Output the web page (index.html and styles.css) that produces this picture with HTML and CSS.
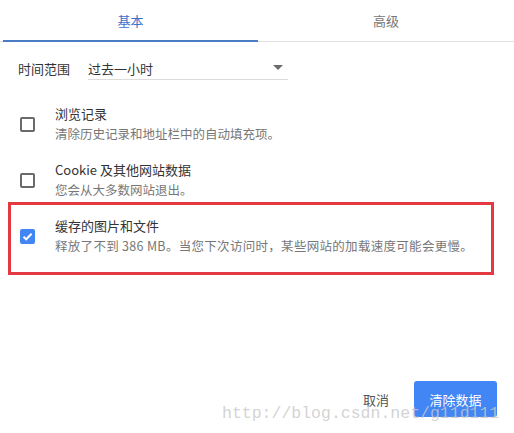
FILE: index.html
```html
<!DOCTYPE html>
<html lang="zh-CN">
<head>
<meta charset="utf-8">
<link rel="stylesheet" href="styles.css">
</head>
<body>
<div class="dialog">
  <div class="tabs">
    <div class="tab active">基本</div>
    <div class="tab">高级</div>
  </div>
  <div class="range">
    <span class="range-label">时间范围</span>
    <div class="select">
      <span>过去一小时</span>
      <span class="caret"></span>
    </div>
  </div>
  <div class="items">
    <div class="item">
      <span class="box"></span>
      <div class="text">
        <div class="title">浏览记录</div>
        <div class="desc">清除历史记录和地址栏中的自动填充项。</div>
      </div>
    </div>
    <div class="item">
      <span class="box"></span>
      <div class="text">
        <div class="title">Cookie 及其他网站数据</div>
        <div class="desc">您会从大多数网站退出。</div>
      </div>
    </div>
    <div class="highlight">
      <div class="item inner">
        <span class="box checked">
          <svg width="15" height="15" viewBox="0 0 15 15"><path d="M3.5 7.8 L6.2 10.3 L11.6 4.8" fill="none" stroke="#fff" stroke-width="2"/></svg>
        </span>
        <div class="text">
          <div class="title">缓存的图片和文件</div>
          <div class="desc wide">释放了不到 386 MB。当您下次访问时，某些网站的加载速度可能会更慢。</div>
        </div>
      </div>
    </div>
  </div>
  <div class="footer">
    <button class="btn cancel">取消</button>
    <button class="btn primary">清除数据</button>
  </div>
  <div class="watermark">http://blog.csdn.net/g11d111</div>
</div>
</body>
</html>
```
FILE: styles.css
```css
html, body {
  margin: 0;
  padding: 0;
  background: #fff;
}
body {
  font-family: "Noto Sans CJK SC", "Microsoft YaHei", sans-serif;
  font-size: 13px;
  color: #333;
}
.dialog {
  position: relative;
  width: 514px;
  height: 433px;
  display: flex;
  flex-direction: column;
  overflow: hidden;
}
.tabs {
  display: flex;
  padding-left: 3px;
  border-bottom: 1px solid #e0e0e0;
  box-sizing: border-box;
  height: 42px;
}
.tab {
  flex: 1;
  display: flex;
  align-items: center;
  justify-content: center;
  color: #777;
  line-height: 20px;
  padding-top: 1px;
}
.tab:first-child {
  flex: 0 0 255px;
}
.tab.active {
  color: #3d6fce;
  border-bottom: 2px solid #4a7cc6;
  margin-bottom: -1px;
}
.range {
  display: flex;
  align-items: center;
  margin-top: 15px;
  padding-left: 18px;
}
.range-label {
  width: 70px;
  line-height: 20px;
}
.select {
  height: 22px;
  border-bottom: 1px solid #dcdcdc;
  display: flex;
  align-items: center;
  justify-content: space-between;
  padding-right: 5px;
  width: 195px;
  color: #333;
}
.caret {
  width: 0;
  height: 0;
  border-left: 5px solid transparent;
  border-right: 5px solid transparent;
  border-top: 5px solid #6b6b6b;
  margin-top: -2px;
}
.items {
  margin-top: 24px;
  display: flex;
  flex-direction: column;
  gap: 16px;
}
.item {
  display: flex;
  align-items: center;
  gap: 20px;
  padding-left: 20px;
}
.box {
  width: 15px;
  height: 15px;
  box-sizing: border-box;
  border: 2px solid #6a6a6a;
  border-radius: 2px;
  flex: none;
  display: flex;
}
.box.checked {
  background: #4285f4;
  border: none;
}
.title {
  line-height: 20px;
  color: #333;
}
.desc {
  line-height: 20px;
  font-size: 12.5px;
  color: #777;
}
.desc.wide {
  letter-spacing: 0.3px;
}
.highlight {
  margin-top: -14px;
  margin-left: 8px;
  width: 486px;
  box-sizing: border-box;
  border: 3px solid #e23a40;
  padding: 11px 0 16px 0;
}
.item.inner {
  padding-left: 9px;
}
.footer {
  margin-top: auto;
  display: flex;
  justify-content: flex-end;
  align-items: center;
  gap: 13px;
  padding: 0 17px 16px 0;
}
.btn {
  font-family: inherit;
  font-size: 13px;
  border: none;
  background: none;
  height: 36px;
  border-radius: 3px;
  cursor: pointer;
}
.cancel {
  color: #555;
  padding: 0 12px;
}
.primary {
  width: 83px;
  background: #4285f4;
  color: #fff;
}
.watermark {
  position: absolute;
  left: 222px;
  top: 404px;
  font-family: "Liberation Mono", "DejaVu Sans Mono", monospace;
  font-size: 16.5px;
  line-height: 20px;
  color: rgba(200, 200, 200, 0.8);
  white-space: nowrap;
  pointer-events: none;
}
```
